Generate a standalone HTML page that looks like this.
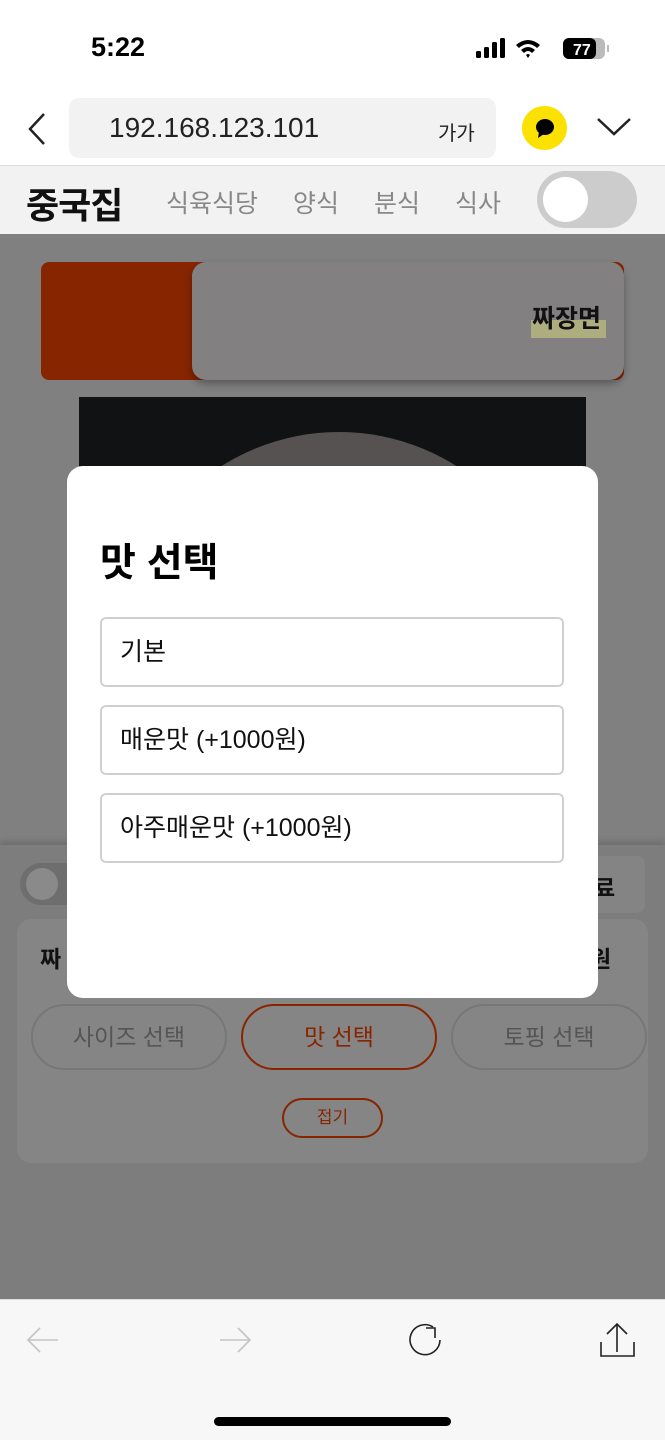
<!DOCTYPE html>
<html><head><meta charset="utf-8"><style>
*{margin:0;padding:0;box-sizing:border-box}
body{width:665px;height:1440px;position:relative;overflow:hidden;background:#808080;font-family:"Liberation Sans","Noto Sans CJK KR",sans-serif}
.abs{position:absolute}
.tab{position:absolute;top:184px;font-size:25px;color:#888}
</style></head><body>
<div class="abs" style="left:0;top:0;width:665px;height:165px;background:#fff"></div>
<div class="abs" style="left:91px;top:32px;font-size:27px;font-weight:bold;color:#000">5:22</div>
<svg class="abs" style="left:476px;top:38px" width="135" height="24">
<rect x="0" y="13" width="5" height="7" rx="1.5"/><rect x="8" y="9" width="5" height="11" rx="1.5"/><rect x="16" y="4" width="5" height="16" rx="1.5"/><rect x="24" y="0" width="5" height="20" rx="1.5"/>
<path d="M40 7 Q52 -3 64 7 L61 10 Q52 2 43 10Z M45 12 Q52 6 59 12 L56 15 Q52 11 48 15Z M50 17 L52 20 L54 17 Q52 15 50 17Z"/>
<rect x="87" y="0" width="42" height="21" rx="6" fill="#bbb"/><rect x="87" y="0" width="33" height="21" rx="6"/>
<text x="97" y="17" fill="#fff" font-size="16" font-weight="bold" font-family="Liberation Sans">77</text>
<rect x="131" y="7" width="2" height="7" fill="#bbb"/></svg>
<svg class="abs" style="left:26px;top:112px" width="22" height="34"><path d="M18 2 L4 17 L18 32" fill="none" stroke="#222" stroke-width="2.5"/></svg>
<div class="abs" style="left:69px;top:98px;width:427px;height:60px;background:#f2f2f2;border-radius:10px"></div>
<div class="abs" style="left:109px;top:112px;font-size:28px;color:#222">192.168.123.101</div>
<div class="abs" style="left:438px;top:117px;font-size:20px;color:#222">가가</div>
<div class="abs" style="left:522px;top:106px;width:45px;height:44px;border-radius:50%;background:#fae100"></div>
<svg class="abs" style="left:533px;top:117px" width="24" height="24"><ellipse cx="12" cy="10" rx="9" ry="8"/><path d="M6 15 L5 21 L11 17Z"/></svg>
<svg class="abs" style="left:596px;top:115px" width="36" height="24"><path d="M2 4 L18 19 L34 4" fill="none" stroke="#222" stroke-width="2.5"/></svg>
<div class="abs" style="left:0;top:165px;width:665px;height:69px;background:#f2f2f2;border-top:1px solid #ddd"></div>
<div class="abs" style="left:26px;top:177px;font-size:36px;font-weight:bold;color:#111;letter-spacing:-1px">중국집</div>
<div class="tab" style="left:166px">식육식당</div>
<div class="tab" style="left:293px">양식</div>
<div class="tab" style="left:374px">분식</div>
<div class="tab" style="left:455px">식사</div>
<div class="abs" style="left:537px;top:171px;width:100px;height:57px;border-radius:29px;background:#ccc"></div>
<div class="abs" style="left:543px;top:177px;width:45px;height:45px;border-radius:50%;background:#fff"></div>
<div class="abs" style="left:41px;top:262px;width:583px;height:118px;background:#862500;border-radius:8px"></div>
<div class="abs" style="left:192px;top:262px;width:432px;height:118px;background:#828080;border-radius:14px;box-shadow:0 4px 8px rgba(0,0,0,.3)"></div>
<div class="abs" style="left:531px;top:320px;width:75px;height:18px;background:#adad80"></div>
<div class="abs" style="left:532px;top:304px;font-size:25px;font-weight:bold;color:#111;line-height:30px">짜장면</div>
<div class="abs" style="left:79px;top:397px;width:507px;height:460px;background:#111214;overflow:hidden">
<div class="abs" style="left:40px;top:35px;width:440px;height:440px;border-radius:50%;background:#565251"></div></div>
<div class="abs" style="left:0;top:845px;width:665px;height:455px;background:#7d7d7d;box-shadow:0 -4px 6px rgba(0,0,0,.15)"></div>
<div class="abs" style="left:20px;top:863px;width:90px;height:42px;border-radius:21px;background:#6e6e6e"></div>
<div class="abs" style="left:26px;top:868px;width:32px;height:32px;border-radius:50%;background:#8a8a8a"></div>
<div class="abs" style="left:560px;top:856px;width:85px;height:57px;border-radius:8px;background:#848484"></div>
<div class="abs" style="left:594px;top:869px;font-size:23px;font-weight:bold;color:#111">료</div>
<div class="abs" style="left:17px;top:919px;width:631px;height:244px;border-radius:14px;background:#858585"></div>
<div class="abs" style="left:40px;top:940px;font-size:23px;font-weight:bold;color:#111">짜</div>
<div class="abs" style="left:590px;top:940px;font-size:23px;font-weight:bold;color:#111">원</div>
<div class="abs" style="left:31px;top:1004px;width:196px;height:66px;border-radius:33px;border:2px solid #777;color:#555;font-size:23px;text-align:center;line-height:62px">사이즈 선택</div>
<div class="abs" style="left:241px;top:1004px;width:196px;height:66px;border-radius:33px;border:2px solid #862500;color:#862500;font-size:23px;text-align:center;line-height:62px">맛 선택</div>
<div class="abs" style="left:451px;top:1004px;width:196px;height:66px;border-radius:33px;border:2px solid #777;color:#555;font-size:23px;text-align:center;line-height:62px">토핑 선택</div>
<div class="abs" style="left:282px;top:1098px;width:101px;height:40px;border-radius:20px;border:2px solid #862500;color:#862500;font-size:17px;text-align:center;line-height:36px">접기</div>
<div class="abs" style="left:67px;top:466px;width:531px;height:532px;background:#fff;border-radius:16px"></div>
<div class="abs" style="left:100px;top:532px;font-size:39px;font-weight:bold;color:#000">맛 선택</div>
<div class="abs" style="left:100px;top:617px;width:464px;height:70px;border:2px solid #d0d0d0;border-radius:6px;font-size:25px;line-height:66px;padding-left:18px;color:#111">기본</div>
<div class="abs" style="left:100px;top:705px;width:464px;height:70px;border:2px solid #d0d0d0;border-radius:6px;font-size:25px;line-height:66px;padding-left:18px;color:#111">매운맛 (+1000원)</div>
<div class="abs" style="left:100px;top:793px;width:464px;height:70px;border:2px solid #d0d0d0;border-radius:6px;font-size:25px;line-height:66px;padding-left:18px;color:#111">아주매운맛 (+1000원)</div>
<div class="abs" style="left:0;top:1299px;width:665px;height:141px;background:#f7f7f7;border-top:1px solid #ddd"></div>
<svg class="abs" style="left:0;top:1310px" width="665" height="60" fill="none" stroke-width="1.6">
<path d="M58 30 H28 M40 18 L28 30 L40 42" stroke="#c4c4c4"/>
<path d="M220 30 H250 M238 18 L250 30 L238 42" stroke="#c4c4c4"/>
<path d="M440 30 A15 15 0 1 1 433 17" stroke="#222"/><path d="M426 18 H435 V28" stroke="#222"/>
<path d="M617 14 V42 M607 24 L617 14 L627 24 M601 32 V46 H634 V32" stroke="#222"/>
</svg>
<div class="abs" style="left:214px;top:1417px;width:237px;height:9px;border-radius:5px;background:#000"></div>
</body></html>
